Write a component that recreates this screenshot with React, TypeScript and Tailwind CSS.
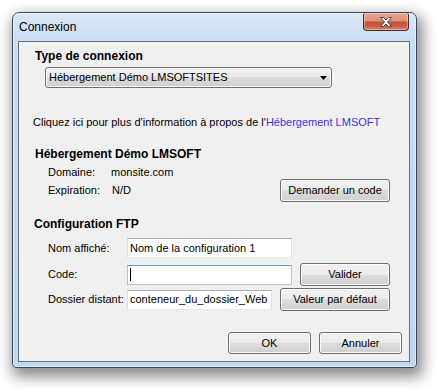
import React from "react";

const btn =
  "flex items-center justify-center border border-[#707070] rounded-[3px] bg-[linear-gradient(#f2f2f2_0%,#ebebeb_50%,#dddddd_50%,#cfcfcf_100%)] shadow-[inset_0_0_0_1px_#fbfbfb] text-black";

const input =
  "h-[20px] bg-white border border-[#abadb3] border-l-[#dbdfe6] border-r-[#dbdfe6] border-b-[#e3e9ef] pl-[2px] flex items-center text-black";

export default function App() {
  return (
    <div
      className="w-[439px] h-[392px] bg-white pt-[12px] pl-[12px] overflow-hidden"
      style={{ fontFamily: '"Liberation Sans", Arial, sans-serif' }}
    >
      <div className="w-[405px] h-[356px] border border-[#3a4858] rounded-t-[7px] rounded-b-[4px] flex flex-col bg-[linear-gradient(180deg,#d9e7f6_0%,#c9ddf3_28px,#bfd7f1_100%)] shadow-[inset_0_0_0_1px_rgba(255,255,255,0.55),3px_6px_14px_3px_rgba(0,0,0,0.45)]">
        {/* title bar */}
        <div className="h-[28px] flex items-start">
          <div className="pl-[6px] pt-[7px] text-[12px] leading-[14px] text-black">Connexion</div>
          <div className="ml-auto mr-[7px] w-[46px] h-[18px] rounded-b-[4px] rounded-t-[2px] border border-[#4a2a24] border-t-0 bg-[linear-gradient(180deg,#e9a796_0%,#dd917d_45%,#c4512f_55%,#c8624a_80%,#d98a74_100%)] shadow-[inset_0_0_0_1px_rgba(255,255,255,0.35)] flex items-center justify-center">
            <svg width="12" height="10" viewBox="0 0 12 10">
              <polygon
                points="0.5,0.5 3.5,0.5 6,3 8.5,0.5 11.5,0.5 7.5,5 11.5,9.5 8.5,9.5 6,7 3.5,9.5 0.5,9.5 4.5,5"
                fill="#ffffff"
                stroke="#4b4b52"
                strokeWidth="1"
                strokeLinejoin="round"
              />
            </svg>
          </div>
        </div>
        {/* client */}
        <div className="ml-[5px] w-[392px] h-[321px] border border-[#64727f] bg-[#f0f0f0] flex flex-col text-[11px] leading-[13px] text-black">
          <div className="mt-[8px] ml-[16px] font-bold text-[12px]">Type de connexion</div>
          <div
            className={`${btn} mt-[4px] ml-[26px] w-[287px] h-[21px] !justify-start pl-[3px]`}
          >
            <span>Hébergement Démo LMSOFTSITES</span>
            <svg className="ml-auto mr-[4px]" width="7" height="4" viewBox="0 0 7 4">
              <polygon points="0,0 7,0 3.5,4" fill="#000" />
            </svg>
          </div>
          <div className="mt-[28px] ml-[14px] whitespace-nowrap">
            Cliquez ici pour plus d'information à propos de l'
            <span className="text-[#3b32e0]">Hébergement LMSOFT</span>
          </div>
          <div className="mt-[19px] ml-[16px] font-bold text-[12px]">Hébergement Démo LMSOFT</div>
          <div className="mt-[5px] flex">
            <div className="ml-[29px] w-[232px] flex flex-col">
              <div className="flex">
                <span className="w-[63px]">Domaine:</span>
                <span>monsite.com</span>
              </div>
              <div className="flex mt-[5px]">
                <span className="w-[64px]">Expiration:</span>
                <span>N/D</span>
              </div>
            </div>
            <div className={`${btn} mt-[13px] w-[110px] h-[23px]`}>Demander un code</div>
          </div>
          <div className="mt-[16px] ml-[15px] font-bold text-[12px]">Configuration FTP</div>
          <div className="mt-[7px] h-[20px] flex items-center">
            <span className="ml-[29px] w-[79px]">Nom affiché:</span>
            <div className={`${input} w-[165px]`}>Nom de la configuration 1</div>
          </div>
          <div className="mt-[5px] h-[23px] flex items-center">
            <span className="ml-[29px] w-[79px]">Code:</span>
            <div className="w-[165px] h-[20px] bg-white border border-[#a4c9e3] border-t-[#5b9bd0] pl-[2px] flex items-center">
              <div className="w-[1px] h-[13px] bg-black" />
            </div>
            <div className={`${btn} ml-[8px] w-[90px] h-[23px]`}>Valider</div>
          </div>
          <div className="mt-[2px] h-[23px] flex items-center">
            <span className="ml-[29px] w-[79px] whitespace-nowrap">Dossier distant:</span>
            <div className={`${input} w-[145px]`}>conteneur_du_dossier_Web</div>
            <div className={`${btn} ml-[8px] w-[110px] h-[23px]`}>Valeur par défaut</div>
          </div>
          <div className="mt-[21px] flex justify-end pr-[7px] gap-[8px]">
            <div className={`${btn} w-[83px] h-[22px]`}>OK</div>
            <div className={`${btn} w-[83px] h-[22px]`}>Annuler</div>
          </div>
        </div>
      </div>
    </div>
  );
}
